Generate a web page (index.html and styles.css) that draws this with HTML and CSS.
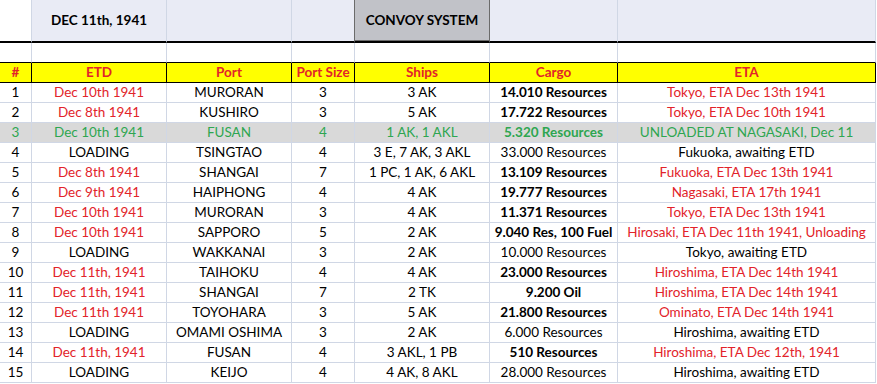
FILE: index.html
```html
<!DOCTYPE html>
<html>
<head>
  <meta charset="utf8">
  <title>Convoy system</title>
  <link rel="stylesheet" href="styles.css">
</head>
<body>

<table class="sheet">
  <colgroup>
    <col class="c-num"><col class="c-etd"><col class="c-port"><col class="c-size"><col class="c-ships"><col class="c-cargo"><col class="c-eta">
  </colgroup>
  <tr class="title-row">
    <td class="corner"></td>
    <td class="bold">DEC 11th, 1941</td>
    <td></td>
    <td class="before-title"></td>
    <td class="title bold">CONVOY SYSTEM</td>
    <td></td>
    <td></td>
  </tr>
  <tr class="blank-row">
    <td></td><td></td><td></td><td></td><td></td><td></td><td></td>
  </tr>
  <tr class="head-row">
    <th>#</th><th>ETD</th><th>Port</th><th>Port Size</th><th>Ships</th><th>Cargo</th><th>ETA</th>
  </tr>
  <tr>
    <td>1</td><td class="red">Dec 10th 1941</td><td>MURORAN</td><td>3</td><td>3 AK</td><td class="bold">14.010 Resources</td><td class="red">Tokyo, ETA Dec 13th 1941</td>
  </tr>
  <tr>
    <td>2</td><td class="red">Dec 8th 1941</td><td>KUSHIRO</td><td>3</td><td>5 AK</td><td class="bold">17.722 Resources</td><td class="red">Tokyo, ETA Dec 10th 1941</td>
  </tr>
  <tr class="done">
    <td>3</td><td>Dec 10th 1941</td><td>FUSAN</td><td>4</td><td>1 AK, 1 AKL</td><td class="bold">5.320 Resources</td><td>UNLOADED AT NAGASAKI, Dec 11</td>
  </tr>
  <tr>
    <td>4</td><td>LOADING</td><td>TSINGTAO</td><td>4</td><td>3 E, 7 AK, 3 AKL</td><td>33.000 Resources</td><td>Fukuoka, awaiting ETD</td>
  </tr>
  <tr>
    <td>5</td><td class="red">Dec 8th 1941</td><td>SHANGAI</td><td>7</td><td>1 PC, 1 AK, 6 AKL</td><td class="bold">13.109 Resources</td><td class="red">Fukuoka, ETA Dec 13th 1941</td>
  </tr>
  <tr>
    <td>6</td><td class="red">Dec 9th 1941</td><td>HAIPHONG</td><td>4</td><td>4 AK</td><td class="bold">19.777 Resources</td><td class="red">Nagasaki, ETA 17th 1941</td>
  </tr>
  <tr>
    <td>7</td><td class="red">Dec 10th 1941</td><td>MURORAN</td><td>3</td><td>4 AK</td><td class="bold">11.371 Resources</td><td class="red">Tokyo, ETA Dec 13th 1941</td>
  </tr>
  <tr>
    <td>8</td><td class="red">Dec 10th 1941</td><td>SAPPORO</td><td>5</td><td>2 AK</td><td class="bold">9.040 Res, 100 Fuel</td><td class="red">Hirosaki, ETA Dec 11th 1941, Unloading</td>
  </tr>
  <tr>
    <td>9</td><td>LOADING</td><td>WAKKANAI</td><td>3</td><td>2 AK</td><td>10.000 Resources</td><td>Tokyo, awaiting ETD</td>
  </tr>
  <tr>
    <td>10</td><td class="red">Dec 11th, 1941</td><td>TAIHOKU</td><td>4</td><td>4 AK</td><td class="bold">23.000 Resources</td><td class="red">Hiroshima, ETA Dec 14th 1941</td>
  </tr>
  <tr>
    <td>11</td><td class="red">Dec 11th, 1941</td><td>SHANGAI</td><td>7</td><td>2 TK</td><td class="bold">9.200 Oil</td><td class="red">Hiroshima, ETA Dec 14th 1941</td>
  </tr>
  <tr>
    <td>12</td><td class="red">Dec 11th 1941</td><td>TOYOHARA</td><td>3</td><td>5 AK</td><td class="bold">21.800 Resources</td><td class="red">Ominato, ETA Dec 14th 1941</td>
  </tr>
  <tr>
    <td>13</td><td>LOADING</td><td>OMAMI OSHIMA</td><td>3</td><td>2 AK</td><td>6.000 Resources</td><td>Hiroshima, awaiting ETD</td>
  </tr>
  <tr>
    <td>14</td><td class="red">Dec 11th, 1941</td><td>FUSAN</td><td>4</td><td>3 AKL, 1 PB</td><td class="bold">510 Resources</td><td class="red">Hiroshima, ETA Dec 12th, 1941</td>
  </tr>
  <tr>
    <td>15</td><td>LOADING</td><td>KEIJO</td><td>4</td><td>4 AK, 8 AKL</td><td>28.000 Resources</td><td>Hiroshima, awaiting ETD</td>
  </tr>
</table>

</body>
</html>
```

FILE: styles.css
```css
body { margin: 0; background: #fff; color: #000; font-family: Lato, "Liberation Sans", sans-serif; font-size: 13.5px; }

.sheet { border-collapse: separate; border-spacing: 0; table-layout: fixed; width: 876px; }
.sheet .c-num { width: 32px; }
.sheet .c-etd { width: 135px; }
.sheet .c-port { width: 125px; }
.sheet .c-size { width: 63px; }
.sheet .c-ships { width: 135px; }
.sheet .c-cargo { width: 128px; }
.sheet .c-eta { width: 258px; }

.sheet td, .sheet th {
  box-sizing: content-box;
  padding: 0;
  height: 19px;
  line-height: 19px;
  text-align: center;
  white-space: nowrap;
  overflow: hidden;
  font-weight: normal;
  border-right: 1px solid #d0d7e5;
  border-bottom: 1px solid #d0d7e5;
}

.sheet .bold { font-weight: bold; }
.sheet .red { color: #e2232a; }

/* top title band */
.title-row td { height: 41px; line-height: 41px; background: #e9ebf5; border-bottom: 2px solid #000; }
.title-row .corner { background: #fff; position: relative; }
.title-row .corner::after { content: ""; position: absolute; left: 5px; bottom: -2px; width: 1px; height: 2px; background: #fff; }
.title-row .before-title { border-right-color: #6b6b6b; }
.title-row .title { background: #c1c2c8; border-right-color: #6b6b6b; box-shadow: inset 0 -1px 0 #6b6b6b; }

.blank-row td { border-bottom-color: #000; }

.head-row th { background: #ffff00; color: #e2232a; font-weight: bold; border-right-color: #000; border-bottom-color: #000; }

.done td { background: #d9d9d9; color: #2ea650; }
```
